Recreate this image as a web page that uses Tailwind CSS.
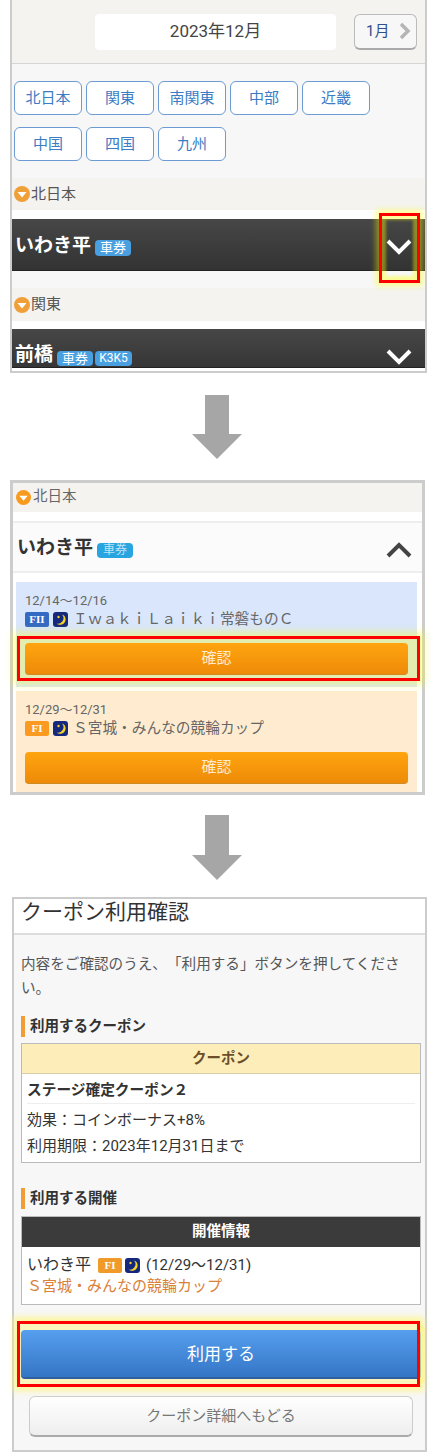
<!DOCTYPE html>
<html lang="ja">
<head>
  <meta charset="UTF-8">
  <title>クーポン利用手順</title>
  <script src="https://cdn.jsdelivr.net/npm/@tailwindcss/browser@4"></script>
</head>
<body class="relative w-[437px] h-[1452px] overflow-hidden bg-white text-[#333] [text-spacing-trim:space-all] font-['Roboto','Noto_Sans_CJK_JP',sans-serif]">

  <!-- step 1 -->
  <section class="relative ml-[10px] w-[417px] h-[373px] border-2 border-t-0 border-[#ccc] overflow-hidden bg-white">
    <div class="h-[64px] bg-[#f4f3f0] border-b border-[#d5d5d5] flex items-center pl-[83px] pr-[8px]">
      <div class="w-[241px] h-[36px] bg-white rounded flex items-center justify-center text-[17px] text-[#444]">2023年12月</div>
      <div class="ml-[18px] w-[63px] h-[36px] bg-[#f7f7f7] border border-[#bbb] border-b-2 border-b-[#aaa] rounded-md flex items-center justify-between pl-[11px] pr-[5px] text-[15px] text-[#2f4f8f]">
        1月
        <svg width="12" height="18" viewBox="0 0 12 18" fill="none" stroke="#b5b5b5" stroke-width="3.5"><path d="M2 2l7 7-7 7"/></svg>
      </div>
    </div>
    <div class="h-[114px] bg-[#f7f7f7] pl-[2px] pt-[17px]">
      <div class="flex gap-x-[4px] text-[15px] text-[#3b7cc4]">
        <div class="w-[68px] h-[34px] bg-white border border-[#6b9bd2] rounded-md flex items-center justify-center">北日本</div>
        <div class="w-[68px] h-[34px] bg-white border border-[#6b9bd2] rounded-md flex items-center justify-center">関東</div>
        <div class="w-[68px] h-[34px] bg-white border border-[#6b9bd2] rounded-md flex items-center justify-center">南関東</div>
        <div class="w-[68px] h-[34px] bg-white border border-[#6b9bd2] rounded-md flex items-center justify-center">中部</div>
        <div class="w-[68px] h-[34px] bg-white border border-[#6b9bd2] rounded-md flex items-center justify-center">近畿</div>
      </div>
      <div class="flex gap-x-[4px] mt-[12px] text-[15px] text-[#3b7cc4]">
        <div class="w-[68px] h-[34px] bg-white border border-[#6b9bd2] rounded-md flex items-center justify-center">中国</div>
        <div class="w-[68px] h-[34px] bg-white border border-[#6b9bd2] rounded-md flex items-center justify-center">四国</div>
        <div class="w-[68px] h-[34px] bg-white border border-[#6b9bd2] rounded-md flex items-center justify-center">九州</div>
      </div>
    </div>
    <div class="h-[32px] bg-[#f4f3f0] flex items-center gap-[1px] pl-[2px] text-[15px] text-[#555]">
      <svg width="16" height="16" viewBox="0 0 16 16"><circle cx="8" cy="8" r="8" fill="#f0a038"/><path d="M3.5 6h9L8 11.5z" fill="#fff"/></svg>
      北日本
    </div>
    <div class="h-[9px] bg-white"></div>
    <div class="h-[52px] bg-gradient-to-b from-[#474747] to-[#333] border-b border-[#222] flex items-center pl-[3px] pr-[13px] text-white">
      <span class="text-[19px] font-bold mt-[3px]">いわき平</span>
      <span class="ml-[4px] mt-[6px] w-[36px] h-[16px] bg-[#4a9fe0] rounded-sm text-[13px] leading-[16px] text-center">車券</span>
      <svg class="ml-auto mt-[4px]" width="26" height="18" viewBox="0 0 26 18" fill="none" stroke="#fff" stroke-width="4"><path d="M2 3l11 11L24 3"/></svg>
    </div>
    <div class="h-[17px] bg-[#f7f7f7]"></div>
    <div class="h-[33px] bg-[#f4f3f0] flex items-center gap-[1px] pl-[2px] text-[15px] text-[#555]">
      <svg width="16" height="16" viewBox="0 0 16 16"><circle cx="8" cy="8" r="8" fill="#f0a038"/><path d="M3.5 6h9L8 11.5z" fill="#fff"/></svg>
      関東
    </div>
    <div class="h-[8px] bg-white"></div>
    <div class="h-[39px] bg-gradient-to-b from-[#474747] to-[#363636] border-b border-[#222] overflow-hidden flex items-start pl-[3px] pr-[13px] text-white">
      <span class="mt-[13px] text-[19px] font-bold leading-[26px]">前橋</span>
      <span class="ml-[4px] mt-[22px] w-[36px] h-[15px] bg-[#4a9fe0] rounded-sm text-[13px] leading-[15px] text-center">車券</span>
      <span class="ml-[2px] mt-[22px] w-[37px] h-[15px] bg-[#4a9fe0] rounded-sm text-[12px] leading-[15px] text-center">K3K5</span>
      <svg class="ml-auto mt-[19px]" width="26" height="18" viewBox="0 0 26 18" fill="none" stroke="#fff" stroke-width="4"><path d="M2 3l11 11L24 3"/></svg>
    </div>
    <div class="absolute left-[367px] top-[213px] w-[41px] h-[70px] border-[3px] border-[#f00] shadow-[0_0_6px_3px_rgba(255,255,0,0.45),inset_0_0_3px_4px_rgba(255,255,0,0.4)]"></div>
  </section>

  <div class="h-[107px] flex items-center justify-center pr-[4px]">
    <svg width="50" height="64" viewBox="0 0 50 64" fill="#a6a6a6"><path d="M13 0h24v39h13L25 64 0 39h13z"/></svg>
  </div>

  <!-- step 2 -->
  <section class="ml-[10px] w-[415px] h-[315px] border-[3px] border-[#ccc] overflow-hidden bg-white">
    <div class="h-[29px] bg-[#f4f3f0] flex items-center gap-[2px] pl-[3px] pb-[1px] text-[14.5px] text-[#666]">
      <svg width="15" height="15" viewBox="0 0 16 16"><circle cx="8" cy="8" r="8" fill="#f79a1e"/><path d="M3.5 6h9L8 11.5z" fill="#fff"/></svg>
      北日本
    </div>
    <div class="h-[9px] bg-white"></div>
    <div class="h-[52px] bg-[#fbfbfb] border-y-2 border-[#eee] flex items-center pl-[4px] pr-[10px] text-[#333]">
      <span class="text-[19px] font-bold mt-[3px]">いわき平</span>
      <span class="ml-[4px] mt-[7px] w-[36px] h-[15px] bg-[#28a4e0] rounded-sm text-[12px] leading-[15px] text-center text-white/70">車券</span>
      <svg class="ml-auto mt-[5px]" width="26" height="16" viewBox="0 0 26 16" fill="none" stroke="#444" stroke-width="4"><path d="M2 14L13 3l11 11"/></svg>
    </div>
    <div class="bg-white pl-[3px] pr-[5px] pt-[9px]">
      <div class="h-[105px] bg-[#d9e6fc] px-[9px] pt-[10px]">
        <div class="text-[13px] leading-[17px] text-[#666]">12/14〜12/16</div>
        <div class="flex items-center h-[19px] mt-[1px] text-[14.7px] text-[#666]">
          <span class="w-[24px] h-[15px] bg-[#3469c4] rounded-[2px] text-white text-[11px] leading-[15px] text-center font-bold font-['Liberation_Serif',serif]">FII</span>
          <svg class="ml-[4px]" width="15" height="15" viewBox="0 0 15 15"><rect width="15" height="15" rx="3" fill="#14287e"/><path d="M9 2.500a5.500 5.500 0 0 1-5.500 9 5.500 5.500 0 0 0 9-3 5.500 5.500 0 0 0-3.500-6z" fill="#f5d327"/><circle cx="5.500" cy="5" r="1.200" fill="#f5d327"/></svg>
          <span class="ml-[5px]">ＩｗａｋｉＬａｉｋｉ常磐ものＣ</span>
        </div>
        <div class="relative z-10 mt-[14px] h-[32px] rounded bg-gradient-to-b from-[#ffa50f] to-[#ee8a08] border-b border-[#cf8a20] text-white/80 text-[15px] leading-[31px] text-center">確認</div>
      </div>
      <div class="mt-[4px] h-[103px] bg-[#ffecd0] px-[9px] pt-[10px]">
        <div class="text-[13px] leading-[17px] text-[#666]">12/29〜12/31</div>
        <div class="flex items-center h-[19px] mt-[1px] text-[14.7px] text-[#666]">
          <span class="w-[24px] h-[15px] bg-[#fb9a20] rounded-[2px] text-white text-[11px] leading-[15px] text-center font-bold font-['Liberation_Serif',serif]">FI</span>
          <svg class="ml-[4px]" width="15" height="15" viewBox="0 0 15 15"><rect width="15" height="15" rx="3" fill="#14287e"/><path d="M9 2.500a5.500 5.500 0 0 1-5.500 9 5.500 5.500 0 0 0 9-3 5.500 5.500 0 0 0-3.500-6z" fill="#f5d327"/><circle cx="5.500" cy="5" r="1.200" fill="#f5d327"/></svg>
          <span class="ml-[5px]">Ｓ宮城・みんなの競輪カップ</span>
        </div>
        <div class="mt-[14px] h-[32px] rounded bg-gradient-to-b from-[#ffa50f] to-[#ee8a08] border-b border-[#cf8a20] text-white/80 text-[15px] leading-[31px] text-center">確認</div>
      </div>
    </div>
  </section>
  <div class="absolute left-[17px] top-[636px] w-[403px] h-[45px] border-[3px] border-[#f00] bg-[#ffff00]/30 shadow-[0_0_8px_4px_rgba(255,255,0,0.4)]"></div>

  <div class="h-[102px] pt-[20px] pr-[4px] flex justify-center items-start">
    <svg width="50" height="65" viewBox="0 0 50 65" fill="#a6a6a6"><path d="M13 0h24v40h13L25 65 0 40h13z"/></svg>
  </div>

  <!-- step 3 -->
  <section class="ml-[12px] w-[415px] h-[555px] border-2 border-[#ccc] border-b-2 bg-[#f7f7f7] overflow-hidden">
    <div class="h-[36px] bg-white border-b-2 border-[#ddd] pl-[7px] text-[21px] leading-[26px] text-[#333]">クーポン利用確認</div>
    <p class="mt-[17px] px-[7px] text-[14.6px] leading-[24px] text-[#555]">内容をご確認のうえ、「利用する」ボタンを押してください。</p>

    <h2 class="mt-[16px] ml-[7px] h-[21px] border-l-4 border-[#ef9d34] pl-[5px] text-[14.5px] leading-[21px] font-bold">利用するクーポン</h2>
    <div class="mt-[6px] mx-[7px] w-[400px] h-[120px] border border-[#bbb] bg-white">
      <div class="h-[30px] bg-[#fdedb9] border-b border-[#d8cfa8] text-center text-[14.5px] leading-[29px] font-bold text-[#6b4f2a]">クーポン</div>
      <div class="px-[5px]">
        <div class="h-[30px] border-b border-[#eee] text-[14.7px] leading-[33px] font-bold">ステージ確定クーポン２</div>
        <div class="mt-[3px] text-[15px] leading-[26px]">効果：コインボーナス+8%</div>
        <div class="text-[15px] leading-[26px]">利用期限：2023年12月31日まで</div>
      </div>
    </div>

    <h2 class="mt-[25px] ml-[7px] h-[21px] border-l-4 border-[#ef9d34] pl-[5px] text-[14.5px] leading-[21px] font-bold">利用する開催</h2>
    <div class="mt-[7px] mx-[7px] w-[400px] h-[89px] border border-[#bbb] bg-white">
      <div class="h-[30px] bg-[#3b3b3b] text-center text-white text-[14.5px] leading-[30px] font-bold">開催情報</div>
      <div class="pl-[5px] pt-[7px]">
        <div class="flex items-center h-[22px] text-[#333]">
          <span class="text-[16px]">いわき平</span>
          <span class="ml-[7px] w-[24px] h-[15px] bg-[#f09a2a] rounded-[2px] text-white text-[11px] leading-[15px] text-center font-bold font-['Liberation_Serif',serif]">FI</span>
          <svg class="ml-[3px]" width="15" height="15" viewBox="0 0 15 15"><rect width="15" height="15" rx="3" fill="#14287e"/><path d="M9 2.500a5.500 5.500 0 0 1-5.500 9 5.500 5.500 0 0 0 9-3 5.500 5.500 0 0 0-3.500-6z" fill="#f5d327"/><circle cx="5.500" cy="5" r="1.200" fill="#f5d327"/></svg>
          <span class="ml-[6px] text-[15px]">(12/29〜12/31)</span>
        </div>
        <div class="text-[15px] leading-[20px] text-[#d9803a]">Ｓ宮城・みんなの競輪カップ</div>
      </div>
    </div>

    <div class="mt-[25px] mx-[7px] w-[400px] h-[49px] rounded bg-gradient-to-b from-[#569fee] to-[#3575c6] border-b-2 border-[#2f5f9f] shadow-[0_0_0_6px_rgba(255,245,140,0.55)] text-white text-[17px] leading-[49px] text-center">利用する</div>
    <div class="mt-[17px] ml-[15px] w-[384px] h-[41px] rounded-md bg-gradient-to-b from-white to-[#eee] border border-[#ccc] border-b-2 border-b-[#aaa] text-[#777] text-[15px] leading-[38px] text-center">クーポン詳細へもどる</div>
  </section>
  <div class="absolute left-[17px] top-[1321px] w-[403px] h-[66px] border-[3px] border-[#f00] shadow-[0_0_6px_4px_rgba(255,245,120,0.7)]"></div>
</body>
</html>
